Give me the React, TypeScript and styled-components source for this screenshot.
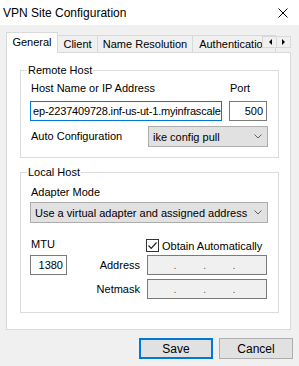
import { createGlobalStyle } from "styled-components";
import styled from "styled-components";

const GlobalStyle = createGlobalStyle`
  html, body {
    margin: 0;
    padding: 0;
    background: #f0f0f0;
  }
  body {
    font-family: "Liberation Sans", Arial, sans-serif;
    font-size: 11px;
    color: #000;
  }
  * {
    box-sizing: border-box;
  }
`;

const Window = styled.div`
  width: 299px;
  height: 366px;
  display: flex;
  flex-direction: column;
  background: #f0f0f0;
  overflow: hidden;
`;

const TitleBar = styled.div`
  height: 25px;
  flex: none;
  background: #fff;
  display: flex;
  align-items: center;
  justify-content: space-between;
  padding: 0 11px 0 3px;
  font-size: 12px;
`;

const TabArea = styled.div`
  margin: 7px 8px 0 6px;
`;

const TabStrip = styled.div`
  position: relative;
  height: 21px;
  margin-bottom: -1px;
  display: flex;
  align-items: flex-end;
  overflow: hidden;
`;

const Tab = styled.div<{ $w: number; $active?: boolean }>`
  position: relative;
  flex: none;
  width: ${(p) => p.$w}px;
  height: ${(p) => (p.$active ? 21 : 17)}px;
  margin-bottom: ${(p) => (p.$active ? 0 : 1)}px;
  margin-left: -1px;
  z-index: ${(p) => (p.$active ? 2 : 1)};
  background: ${(p) => (p.$active ? "#fff" : "#f0f0f0")};
  border: 1px solid #d9d9d9;
  border-bottom: none;
  display: flex;
  align-items: center;
  justify-content: center;
  padding-bottom: ${(p) => (p.$active ? 2 : 0)}px;
  white-space: nowrap;
  &:first-child {
    margin-left: 0;
  }
`;

const ScrollArrows = styled.div`
  position: absolute;
  right: 0;
  top: 4px;
  z-index: 3;
  display: flex;
`;

const ArrowButton = styled.div`
  width: 15px;
  height: 12px;
  margin-left: -1px;
  background: #f0f0f0;
  border: 1px solid #d9d9d9;
  display: flex;
  align-items: center;
  justify-content: center;
`;

const Panel = styled.div`
  height: 278px;
  background: #fff;
  border: 1px solid #d9d9d9;
  padding: 11px 11px 0 13px;
  display: flex;
  flex-direction: column;
  gap: 8px;
`;

const Group = styled.fieldset<{ $pb: number }>`
  margin: 0;
  border: 1px solid #dcdcdc;
  padding: 4px 10px ${(p) => p.$pb}px 9px;
  min-width: 0;
`;

const Legend = styled.legend`
  padding: 0 1px;
  margin-left: -3px;
  line-height: 13px;
`;

const Label = styled.div`
  line-height: 13px;
  padding-left: 1px;
  white-space: nowrap;
`;

const HostGrid = styled.div`
  display: grid;
  grid-template-columns: 192px 38px;
  column-gap: 7px;
  row-gap: 6px;
  margin-top: 1px;
`;

const TextBox = styled.div<{ $focused?: boolean; $w?: number; $align?: string }>`
  height: 20px;
  width: ${(p) => (p.$w ? `${p.$w}px` : "auto")};
  border: 1px solid ${(p) => (p.$focused ? "#0078d7" : "#7a7a7a")};
  background: #fff;
  padding: 0 3px 0 2px;
  display: flex;
  align-items: center;
  justify-content: ${(p) => (p.$align === "right" ? "flex-end" : "flex-start")};
  overflow: hidden;
  white-space: nowrap;
  letter-spacing: ${(p) => (p.$focused ? "-0.18px" : "0")};
`;

const ComboRow = styled.div`
  display: flex;
  align-items: center;
  justify-content: space-between;
  margin-top: 5px;
`;

const Combo = styled.div<{ $w?: number }>`
  height: 21px;
  width: ${(p) => (p.$w ? `${p.$w}px` : "100%")};
  background: #e1e1e1;
  border: 1px solid #adadad;
  display: flex;
  align-items: center;
  justify-content: space-between;
  padding: 0 5px 0 4px;
  white-space: nowrap;
`;

const Stack = styled.div`
  display: flex;
  flex-direction: column;
  gap: 3px;
  padding-top: 3px;
`;

const LocalGrid = styled.div`
  display: grid;
  grid-template-columns: 38px 79px 120px;
  row-gap: 4px;
  align-items: center;
  margin-top: 15px;
`;

const CheckWrap = styled.label`
  grid-column: 3;
  display: flex;
  align-items: center;
  gap: 3px;
  margin-left: -1px;
  height: 14px;
  margin-bottom: -2px;
`;

const Box = styled.span`
  width: 13px;
  height: 13px;
  border: 1px solid #333;
  background: #fff;
  display: flex;
  align-items: center;
  justify-content: center;
`;

const FieldLabel = styled.div`
  text-align: right;
  padding-right: 7px;
  line-height: 13px;
`;

const IpBox = styled.div`
  height: 20px;
  border: 1px solid #7a7a7a;
  background: #f0f0f0;
  display: grid;
  grid-template-columns: repeat(4, 1fr);
  align-items: center;
`;

const IpDot = styled.span`
  color: #6d6d6d;
  text-align: right;
  padding-right: 1px;
`;

const Footer = styled.div`
  display: flex;
  justify-content: flex-end;
  gap: 6px;
  padding: 8px 6px 0 0;
`;

const Button = styled.div<{ $default?: boolean }>`
  width: 74px;
  height: 21px;
  background: #e1e1e1;
  border: ${(p) => (p.$default ? "2px solid #0078d7" : "1px solid #adadad")};
  display: flex;
  align-items: center;
  justify-content: center;
  font-size: 12px;
`;

const Chevron = () => (
  <svg width="8" height="5" viewBox="0 0 8 5">
    <path d="M0.5 0.5 L4 4 L7.5 0.5" fill="none" stroke="#606060" strokeWidth="1" />
  </svg>
);

const Close = () => (
  <svg width="10" height="10" viewBox="0 0 10 10">
    <path d="M0.5 0.5 L9.5 9.5 M9.5 0.5 L0.5 9.5" stroke="#000" strokeWidth="1" />
  </svg>
);

const Tri = ({ dir }: { dir: "left" | "right" }) => (
  <svg width="4" height="6" viewBox="0 0 4 6">
    <path d={dir === "left" ? "M4 0 L1 3 L4 6 Z" : "M0 0 L3 3 L0 6 Z"} fill="#000" />
  </svg>
);

const Check = () => (
  <svg width="11" height="11" viewBox="0 0 11 11">
    <path d="M1.5 5.5 L4.2 8.3 L9.5 2.5" fill="none" stroke="#222" strokeWidth="1.2" />
  </svg>
);

const IpField = () => (
  <IpBox>
    <IpDot>.</IpDot>
    <IpDot>.</IpDot>
    <IpDot>.</IpDot>
    <span />
  </IpBox>
);

export default function App() {
  return (
    <>
      <GlobalStyle />
      <Window>
        <TitleBar>
          <span>VPN Site Configuration</span>
          <Close />
        </TitleBar>
        <TabArea>
          <TabStrip>
            <Tab $w={52} $active>
              General
            </Tab>
            <Tab $w={41}>Client</Tab>
            <Tab $w={96}>Name Resolution</Tab>
            <Tab $w={84}>Authentication</Tab>
            <ScrollArrows>
              <ArrowButton>
                <Tri dir="left" />
              </ArrowButton>
              <ArrowButton>
                <Tri dir="right" />
              </ArrowButton>
            </ScrollArrows>
          </TabStrip>
          <Panel>
            <Group $pb={10}>
              <Legend>Remote Host</Legend>
              <HostGrid>
                <Label>Host Name or IP Address</Label>
                <Label>Port</Label>
                <TextBox $focused>ep-2237409728.inf-us-ut-1.myinfrascale</TextBox>
                <TextBox $align="right">500</TextBox>
              </HostGrid>
              <ComboRow>
                <Label>Auto Configuration</Label>
                <Combo $w={120}>
                  <span>ike config pull</span>
                  <Chevron />
                </Combo>
              </ComboRow>
            </Group>
            <Group $pb={13}>
              <Legend>Local Host</Legend>
              <Stack>
                <Label>Adapter Mode</Label>
                <Combo>
                  <span>Use a virtual adapter and assigned address</span>
                  <Chevron />
                </Combo>
              </Stack>
              <LocalGrid>
                <Label>MTU</Label>
                <span />
                <CheckWrap>
                  <Box>
                    <Check />
                  </Box>
                  Obtain Automatically
                </CheckWrap>
                <TextBox $w={37} $align="right">
                  1380
                </TextBox>
                <FieldLabel>Address</FieldLabel>
                <IpField />
                <span />
                <FieldLabel>Netmask</FieldLabel>
                <IpField />
              </LocalGrid>
            </Group>
          </Panel>
        </TabArea>
        <Footer>
          <Button $default>Save</Button>
          <Button>Cancel</Button>
        </Footer>
      </Window>
    </>
  );
}
